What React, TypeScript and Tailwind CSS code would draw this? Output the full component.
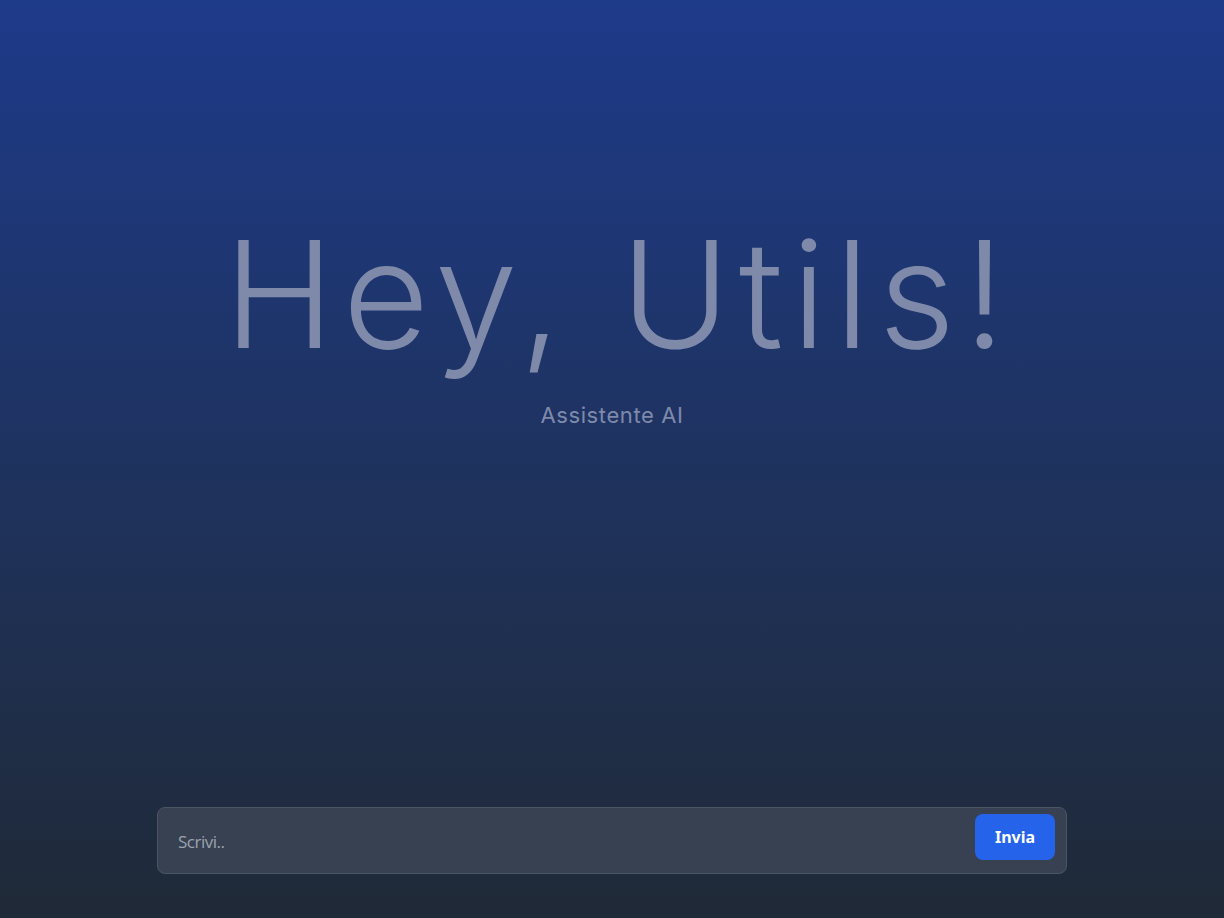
import React, { useState } from 'react';

const App: React.FC = () => {
  const [message, setMessage] = useState('');

  return (
    <div className="h-[918px] w-full bg-gradient-to-b from-[#1e3a8a] to-[#1f2937] flex flex-col items-center font-['Inter',sans-serif]">
      {/* Intestazione */}
      <div className="flex flex-col items-center pt-[220px]">
        <h1 className="text-[149px] leading-none font-light text-[#7f8aab] tracking-[8.5px] pl-[14px]">Hey, Utils!</h1>
        <p className="mt-[30px] text-[22px] text-[#7f8aab] tracking-[0.6px]">Assistente AI</p>
      </div>

      {/* Barra di input */}
      <div className="mt-auto mb-[44px] w-[910px] h-[67px] bg-[#374151] border border-[#4b5563] rounded-lg flex items-start pl-5 pr-[11px] pt-[6px]">
        <input
          value={message}
          onChange={(e) => setMessage(e.target.value)}
          placeholder="Scrivi.."
          className="flex-1 h-[54px] bg-transparent outline-none text-[17px] text-gray-200 placeholder:text-[#9ca3af] font-['Open_Sans',sans-serif] tracking-[-0.5px]"
        />
        <button className="w-[80px] h-[46px] bg-[#2563eb] rounded-lg text-white font-bold text-[16px] font-['Noto_Sans',sans-serif]">
          Invia
        </button>
      </div>
    </div>
  );
};

export default App;
